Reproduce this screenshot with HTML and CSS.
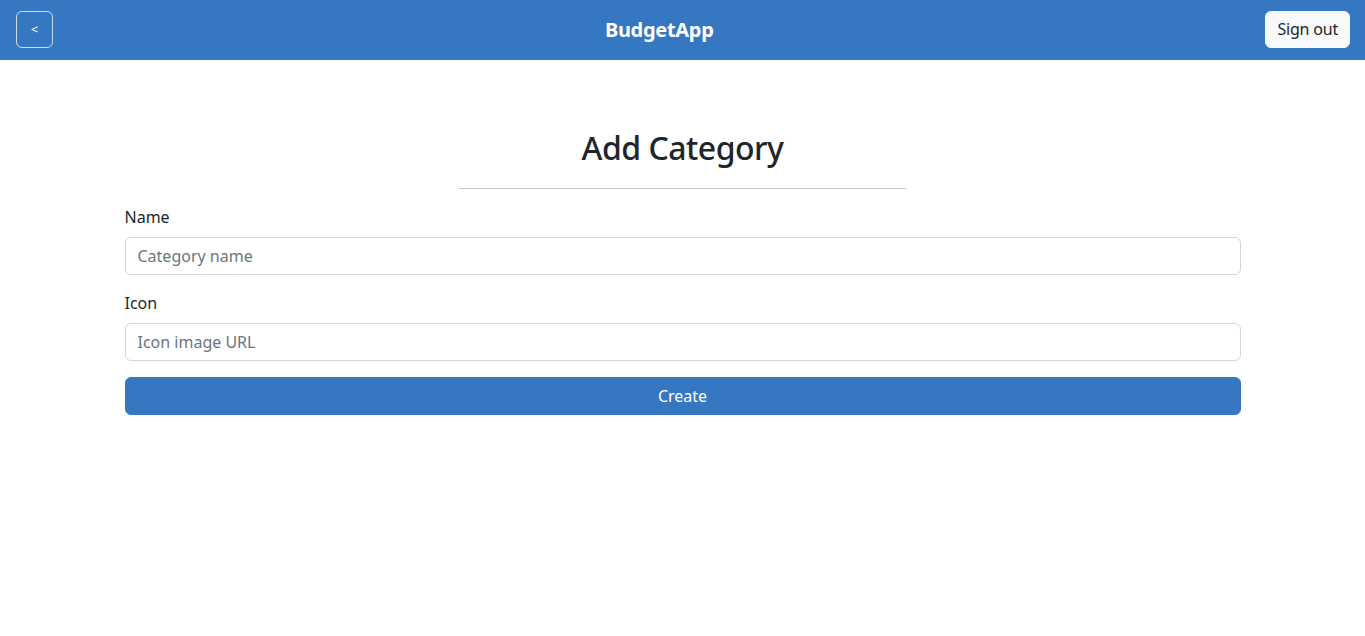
FILE: index.html
```html
<!DOCTYPE html>
<html lang="en">
<head>
<meta charset="utf-8">
<title>BudgetApp</title>
<link rel="stylesheet" href="styles.css">
</head>
<body>
<nav class="navbar">
  <button class="back-btn" type="button">&lt;</button>
  <span class="brand">BudgetApp</span>
  <button class="signout-btn" type="button">Sign out</button>
</nav>
<main class="container">
  <h2 class="title">Add Category</h2>
  <hr class="divider">
  <form class="form">
    <div class="field">
      <label class="label" for="name">Name</label>
      <input class="input" id="name" type="text" placeholder="Category name">
    </div>
    <div class="field">
      <label class="label" for="icon">Icon</label>
      <input class="input" id="icon" type="text" placeholder="Icon image URL">
    </div>
    <button class="create-btn" type="button">Create</button>
  </form>
</main>
</body>
</html>
```
FILE: styles.css
```css
* { box-sizing: border-box; }
html, body { margin: 0; padding: 0; }
body {
  font-family: "Noto Sans", "Open Sans", "Liberation Sans", sans-serif;
  font-size: 16px;
  line-height: 1.5;
  color: #212529;
  background: #fff;
}
.navbar {
  height: 60px;
  background: #3677c2;
  display: flex;
  align-items: center;
  justify-content: space-between;
  padding: 0 15px 2px 16px;
}
.back-btn {
  width: 37px;
  height: 37px;
  border: 1px solid rgba(255,255,255,0.75);
  border-radius: 6px;
  background: transparent;
  color: #fff;
  font-family: inherit;
  font-size: 13px;
  padding: 0;
  line-height: 1;
}
.brand {
  color: #fff;
  font-weight: 700;
  font-size: 20px;
  line-height: 30px;
  letter-spacing: -0.3px;
  margin-top: 2px;
}
.signout-btn {
  height: 37px;
  padding: 0 11px;
  background: #f8f9fa;
  color: #212529;
  border: 1px solid #f8f9fa;
  border-radius: 6px;
  font-family: inherit;
  font-size: 16px;
  line-height: 24px;
  letter-spacing: -0.2px;
}
.container {
  max-width: 1140px;
  margin: 0 auto;
  padding: 69px 12px 0;
}
.title {
  margin: 0;
  text-align: center;
  font-size: 32px;
  font-weight: 500;
  line-height: 1.2;
  letter-spacing: -0.5px;
}
.divider {
  width: 40%;
  margin: 21px auto 16px;
  border: 0;
  border-top: 1px solid #c8c8c8;
  height: 0;
}
.field { margin-bottom: 16px; }
.label {
  display: block;
  margin-bottom: 8px;
  font-size: 16px;
  line-height: 24px;
}
.input {
  display: block;
  width: 100%;
  height: 38px;
  padding: 6px 12px;
  border: 1px solid #d3d6da;
  border-radius: 6px;
  font-family: inherit;
  font-size: 16px;
  line-height: 24px;
  color: #212529;
  background: #fff;
}
.input::placeholder { color: #6c757d; }
.create-btn {
  display: block;
  width: 100%;
  height: 38px;
  background: #3677c2;
  border: 1px solid #3677c2;
  border-radius: 6px;
  color: #fff;
  font-family: inherit;
  font-size: 16px;
  line-height: 24px;
}
```
